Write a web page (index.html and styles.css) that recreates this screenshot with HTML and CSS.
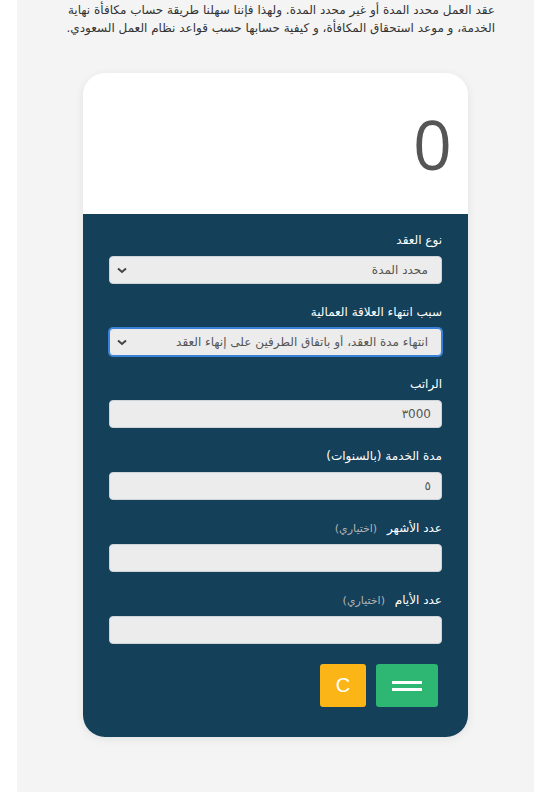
FILE: index.html
```html
<!DOCTYPE html>
<html lang="ar" dir="rtl">
<head>
    <meta charset="UTF-8">
    <meta name="viewport" content="width=device-width, initial-scale=1.0">
    <title>حاسبة مكافأة نهاية الخدمة</title>
    <link rel="stylesheet" href="styles.css">
</head>
<body>
    <div class="page">
        <p class="intro">عقد العمل محدد المدة أو غير محدد المدة. ولهذا فإننا سهلنا طريقة حساب مكافأة نهاية الخدمة، و موعد استحقاق المكافأة، و كيفية حسابها حسب قواعد نظام العمل السعودي.</p>

        <div class="calc-card">
            <div class="calc-display">
                <span class="calc-result" id="result">0</span>
            </div>

            <div class="calc-form">
                <div class="form-group">
                    <label class="form-label">نوع العقد</label>
                    <div class="select-wrap">
                        <select class="form-input">
                            <option>محدد المدة</option>
                            <option>غير محدد المدة</option>
                        </select>
                        <svg class="select-arrow" width="10" height="7" viewBox="0 0 10 7"><path d="M1 1.5 L5 5 L9 1.5" fill="none" stroke="#444" stroke-width="2"/></svg>
                    </div>
                </div>

                <div class="form-group">
                    <label class="form-label">سبب انتهاء العلاقة العمالية</label>
                    <div class="select-wrap">
                        <select class="form-input focused">
                            <option>انتهاء مدة العقد، أو باتفاق الطرفين على إنهاء العقد</option>
                        </select>
                        <svg class="select-arrow" width="10" height="7" viewBox="0 0 10 7"><path d="M1 1.5 L5 5 L9 1.5" fill="none" stroke="#444" stroke-width="2"/></svg>
                    </div>
                </div>

                <div class="form-group">
                    <label class="form-label">الراتب</label>
                    <input type="text" class="form-input" value="٣000">
                </div>

                <div class="form-group">
                    <label class="form-label">مدة الخدمة (بالسنوات)</label>
                    <input type="text" class="form-input" value="٥">
                </div>

                <div class="form-group">
                    <label class="form-label">عدد الأشهر <span class="optional">(اختياري)</span></label>
                    <input type="text" class="form-input">
                </div>

                <div class="form-group">
                    <label class="form-label">عدد الأيام <span class="optional">(اختياري)</span></label>
                    <input type="text" class="form-input">
                </div>

                <div class="calc-actions">
                    <button class="calc-btn btn-equal" aria-label="احسب"><span class="equal-bar"></span><span class="equal-bar"></span></button>
                    <button class="calc-btn btn-clear">C</button>
                </div>
            </div>
        </div>
    </div>
</body>
</html>
```

FILE: styles.css
```css
:root {
    --page-bg: #f4f4f4;
    --dark: #144059;
    --field-bg: #ececec;
    --text: #333333;
    --green: #2eb673;
    --yellow: #fbb516;
}

body {
    margin: 0;
    background: #ffffff;
    font-family: 'DejaVu Sans', sans-serif;
}

.page {
    margin: 0 11px 0 17px;
    width: 517px;
    height: 792px;
    box-sizing: border-box;
    padding: 1px 39px 0;
    background: var(--page-bg);
    overflow: hidden;
}

.intro {
    margin: 0 0 36px;
    font-size: 12px;
    line-height: 18px;
    color: var(--text);
}

.calc-card {
    width: 385px;
    margin: 0 auto;
    border-radius: 22px;
    overflow: hidden;
    box-shadow: 0 2px 10px rgba(0, 0, 0, 0.08);
}

.calc-display {
    height: 141px;
    background: #ffffff;
    display: flex;
    align-items: center;
    padding: 0 16px;
}

.calc-result {
    font-family: 'Open Sans', sans-serif;
    font-size: 68px;
    color: #555555;
    line-height: 1;
}

.calc-form {
    background: var(--dark);
    padding: 18px 26px 30px;
}

.form-group {
    margin-bottom: 20px;
}

.form-label {
    display: block;
    height: 16px;
    font-size: 12px;
    line-height: 16px;
    margin-bottom: 8px;
    color: #ffffff;
}

.optional {
    font-size: 11px;
    line-height: 1;
    color: #b5b5b5;
    margin-right: 6px;
}

.form-input {
    display: block;
    width: 100%;
    height: 28px;
    box-sizing: border-box;
    padding: 0 10px;
    border: 1px solid #cfd4d8;
    border-radius: 4px;
    background: var(--field-bg);
    font-family: 'DejaVu Sans', sans-serif;
    font-size: 12px;
    color: #555555;
    outline: none;
}

select.form-input {
    appearance: none;
    -webkit-appearance: none;
    padding-right: 13px;
}

.form-input.focused {
    border-color: #3a82d8;
    box-shadow: 0 0 0 1px #3a82d8;
}

.select-wrap {
    position: relative;
}

.select-arrow {
    position: absolute;
    left: 8px;
    top: 11px;
}

.calc-actions {
    display: flex;
    gap: 10px;
    padding-right: 4px;
    margin-top: 20px;
}

.calc-btn {
    height: 43px;
    border: none;
    border-radius: 3px;
    color: #ffffff;
    cursor: pointer;
}

.btn-clear {
    width: 46px;
    background: var(--yellow);
    font-family: 'Liberation Sans', sans-serif;
    font-size: 20px;
}

.btn-equal {
    width: 62px;
    background: var(--green);
    display: flex;
    flex-direction: column;
    align-items: center;
    justify-content: center;
    gap: 4px;
}

.equal-bar {
    display: block;
    width: 30px;
    height: 3px;
    background: #ffffff;
}
```
